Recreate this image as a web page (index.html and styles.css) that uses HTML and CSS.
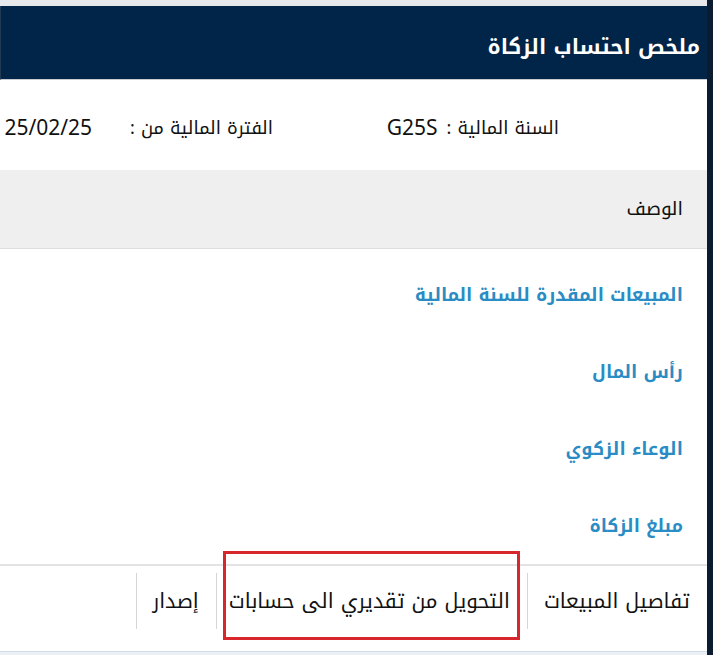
FILE: index.html
```html
<!DOCTYPE html>
<html lang="ar" dir="rtl">
<head>
<meta charset="utf-8">
<title>ملخص احتساب الزكاة</title>
<link rel="stylesheet" href="styles.css">
</head>
<body>
<div class="screen">
  <div class="panel">
    <div class="topgap"></div>
    <header class="title-bar">
      <h1 class="title">ملخص احتساب الزكاة</h1>
    </header>
    <section class="info-row">
      <div class="info-item info-year">
        <span class="info-label">السنة المالية :</span>
        <span class="info-value">G25S</span>
      </div>
      <div class="info-item info-period">
        <span class="info-label">الفترة المالية من :</span>
        <span class="info-value info-date">25/02/25</span>
      </div>
    </section>
    <section class="table">
      <div class="table-head">الوصف</div>
      <div class="table-body">
        <div class="table-row"><a class="row-link">المبيعات المقدرة للسنة المالية</a></div>
        <div class="table-row"><a class="row-link">رأس المال</a></div>
        <div class="table-row"><a class="row-link">الوعاء الزكوي</a></div>
        <div class="table-row"><a class="row-link">مبلغ الزكاة</a></div>
      </div>
    </section>
    <nav class="tabs">
      <div class="tab tab-first">تفاصيل المبيعات</div>
      <div class="tab tab-marked">التحويل من تقديري الى حسابات<span class="highlight-box"></span></div>
      <div class="tab tab-short">إصدار</div>
    </nav>
    <div class="bottom-strip"></div>
  </div>
  <div class="edge"></div>
</div>
</body>
</html>
```
FILE: styles.css
```css
* { box-sizing: border-box; }
html, body {
  margin: 0;
  padding: 0;
  height: 100%;
}
body {
  background: #0b1c30;
  font-family: "Noto Kufi Arabic", "Noto Sans Arabic", "Open Sans", "DejaVu Sans", sans-serif;
  color: #1a1a1a;
  overflow: hidden;
}
.screen {
  direction: ltr;
  display: flex;
  flex-direction: row;
  height: 655px;
  width: 713px;
}
.panel {
  direction: rtl;
  width: 707px;
  flex: none;
  background: #ffffff;
  display: flex;
  flex-direction: column;
  overflow: hidden;
}
.edge {
  flex: 1;
  background: #0b1c30;
}
.topgap {
  height: 6px;
  background: #e6e8eb;
}
.title-bar {
  height: 74px;
  background: #012549;
  display: flex;
  align-items: center;
  padding-right: 7px;
  padding-top: 9px;
  border-bottom: 1px solid #c9cdd3;
  border-left: 1px solid #233a55;
}
.title {
  margin: 0;
  color: #ffffff;
  font-size: 21px;
  font-weight: bold;
  line-height: 1;
}
.info-row {
  height: 90px;
  display: flex;
  align-items: center;
  padding-right: 148px;
  padding-top: 6px;
  font-size: 18px;
  color: #111;
  white-space: nowrap;
}
.info-item {
  display: flex;
  align-items: center;
  flex: none;
}
.info-year {
  width: 286px;
  gap: 9px;
}
.info-period {
  gap: 38px;
}
.info-value {
  direction: ltr;
  font-size: 21px;
}
.table-head {
  height: 79px;
  background: #efefef;
  border-bottom: 1px solid #dedede;
  display: flex;
  align-items: center;
  padding-right: 24px;
  font-size: 19px;
  color: #111;
}
.table-body {
  padding-top: 7px;
}
.table-row {
  height: 77px;
  display: flex;
  align-items: center;
  padding-right: 24px;
}
.row-link {
  color: #2a8cc4;
  font-size: 18px;
  font-weight: bold;
  cursor: pointer;
}
.tabs {
  height: 87px;
  display: flex;
  align-items: flex-start;
  padding-top: 7px;
  border-top: 2px solid #e3e3e3;
}
.tab {
  position: relative;
  height: 56px;
  display: flex;
  align-items: center;
  padding: 0 17px 0 12px;
  border-left: 1px solid #d6d6d6;
  font-size: 20.5px;
  color: #111;
  white-space: nowrap;
}
.tab-first {
  padding-left: 16px;
}
.tab-short {
  min-width: 80px;
}
.highlight-box {
  position: absolute;
  top: -22px;
  bottom: -11px;
  left: 6px;
  right: 7px;
  border: 3px solid #d8262d;
  pointer-events: none;
}
.bottom-strip {
  flex: 1;
  background: #eaf0f6;
  border-top: 1px solid #d5dde6;
}
```
